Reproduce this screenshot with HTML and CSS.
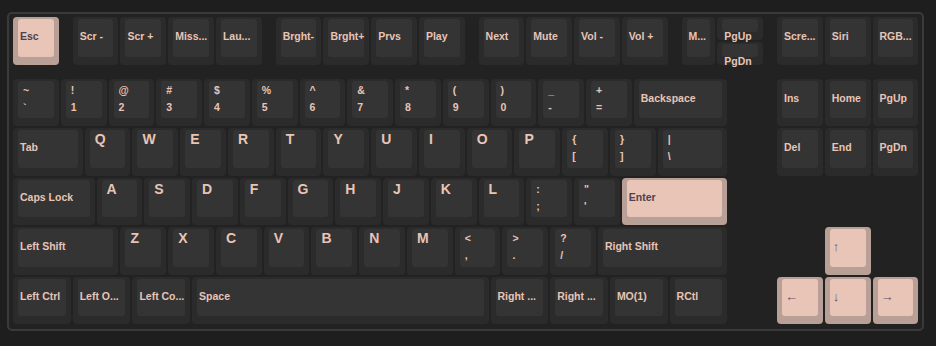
FILE: index.html
```html
<html>
    <head>
        <title>Keymap</title>
        <meta name="viewport" content="width=device-width, initial-scale=1.0">
        <link rel="stylesheet" href="styles.css">
    </head>
    <body>
        <div class="board">
            <div class="row row-fn">
                <div class="key accent"><div class="cap">Esc</div></div>
                <div class="key ml25"><div class="cap">Scr -</div></div>
                <div class="key"><div class="cap">Scr +</div></div>
                <div class="key"><div class="cap">Miss...</div></div>
                <div class="key"><div class="cap">Lau...</div></div>
                <div class="key ml25"><div class="cap">Brght-</div></div>
                <div class="key"><div class="cap">Brght+</div></div>
                <div class="key"><div class="cap">Prvs</div></div>
                <div class="key"><div class="cap">Play</div></div>
                <div class="key ml25"><div class="cap">Next</div></div>
                <div class="key"><div class="cap">Mute</div></div>
                <div class="key"><div class="cap">Vol -</div></div>
                <div class="key"><div class="cap">Vol +</div></div>
                <div class="key w075 ml25"><div class="cap">M...</div></div>
                <div class="stack">
                    <div class="key half"><div class="cap">PgUp</div></div>
                    <div class="key half"><div class="cap">PgDn</div></div>
                </div>
                <div class="key ml25"><div class="cap">Scre...</div></div>
                <div class="key"><div class="cap">Siri</div></div>
                <div class="key"><div class="cap">RGB...</div></div>
            </div>

            <div class="row">
                <div class="key"><div class="cap dual"><span>~</span><span>`</span></div></div>
                <div class="key"><div class="cap dual"><span>!</span><span>1</span></div></div>
                <div class="key"><div class="cap dual"><span>@</span><span>2</span></div></div>
                <div class="key"><div class="cap dual"><span>#</span><span>3</span></div></div>
                <div class="key"><div class="cap dual"><span>$</span><span>4</span></div></div>
                <div class="key"><div class="cap dual"><span>%</span><span>5</span></div></div>
                <div class="key"><div class="cap dual"><span>^</span><span>6</span></div></div>
                <div class="key"><div class="cap dual"><span>&amp;</span><span>7</span></div></div>
                <div class="key"><div class="cap dual"><span>*</span><span>8</span></div></div>
                <div class="key"><div class="cap dual"><span>(</span><span>9</span></div></div>
                <div class="key"><div class="cap dual"><span>)</span><span>0</span></div></div>
                <div class="key"><div class="cap dual"><span>_</span><span>-</span></div></div>
                <div class="key"><div class="cap dual"><span>+</span><span>=</span></div></div>
                <div class="key w2"><div class="cap">Backspace</div></div>
                <div class="key ml1"><div class="cap">Ins</div></div>
                <div class="key"><div class="cap">Home</div></div>
                <div class="key"><div class="cap">PgUp</div></div>
            </div>

            <div class="row">
                <div class="key w15"><div class="cap">Tab</div></div>
                <div class="key"><div class="cap alpha">Q</div></div>
                <div class="key"><div class="cap alpha">W</div></div>
                <div class="key"><div class="cap alpha">E</div></div>
                <div class="key"><div class="cap alpha">R</div></div>
                <div class="key"><div class="cap alpha">T</div></div>
                <div class="key"><div class="cap alpha">Y</div></div>
                <div class="key"><div class="cap alpha">U</div></div>
                <div class="key"><div class="cap alpha">I</div></div>
                <div class="key"><div class="cap alpha">O</div></div>
                <div class="key"><div class="cap alpha">P</div></div>
                <div class="key"><div class="cap dual"><span>{</span><span>[</span></div></div>
                <div class="key"><div class="cap dual"><span>}</span><span>]</span></div></div>
                <div class="key w15"><div class="cap dual"><span>|</span><span>\</span></div></div>
                <div class="key ml1"><div class="cap">Del</div></div>
                <div class="key"><div class="cap">End</div></div>
                <div class="key"><div class="cap">PgDn</div></div>
            </div>

            <div class="row">
                <div class="key w175"><div class="cap">Caps Lock</div></div>
                <div class="key"><div class="cap alpha">A</div></div>
                <div class="key"><div class="cap alpha">S</div></div>
                <div class="key"><div class="cap alpha">D</div></div>
                <div class="key"><div class="cap alpha">F</div></div>
                <div class="key"><div class="cap alpha">G</div></div>
                <div class="key"><div class="cap alpha">H</div></div>
                <div class="key"><div class="cap alpha">J</div></div>
                <div class="key"><div class="cap alpha">K</div></div>
                <div class="key"><div class="cap alpha">L</div></div>
                <div class="key"><div class="cap dual"><span>:</span><span>;</span></div></div>
                <div class="key"><div class="cap dual"><span>"</span><span>'</span></div></div>
                <div class="key w225 accent"><div class="cap">Enter</div></div>
            </div>

            <div class="row">
                <div class="key w225"><div class="cap">Left Shift</div></div>
                <div class="key"><div class="cap alpha">Z</div></div>
                <div class="key"><div class="cap alpha">X</div></div>
                <div class="key"><div class="cap alpha">C</div></div>
                <div class="key"><div class="cap alpha">V</div></div>
                <div class="key"><div class="cap alpha">B</div></div>
                <div class="key"><div class="cap alpha">N</div></div>
                <div class="key"><div class="cap alpha">M</div></div>
                <div class="key"><div class="cap dual"><span>&lt;</span><span>,</span></div></div>
                <div class="key"><div class="cap dual"><span>&gt;</span><span>.</span></div></div>
                <div class="key"><div class="cap dual"><span>?</span><span>/</span></div></div>
                <div class="key w275"><div class="cap">Right Shift</div></div>
                <div class="key ml2 accent"><div class="cap arrow">↑</div></div>
            </div>

            <div class="row">
                <div class="key w125"><div class="cap">Left Ctrl</div></div>
                <div class="key w125"><div class="cap">Left O...</div></div>
                <div class="key w125"><div class="cap">Left Co...</div></div>
                <div class="key w625"><div class="cap">Space</div></div>
                <div class="key w125"><div class="cap">Right ...</div></div>
                <div class="key w125"><div class="cap">Right ...</div></div>
                <div class="key w125"><div class="cap">MO(1)</div></div>
                <div class="key w125"><div class="cap">RCtl</div></div>
                <div class="key ml1 accent"><div class="cap arrow">←</div></div>
                <div class="key accent"><div class="cap arrow">↓</div></div>
                <div class="key accent"><div class="cap arrow">→</div></div>
            </div>
        </div>
    </body>
</html>
```

FILE: styles.css
```css
* {
    box-sizing: border-box;
}

html, body {
    margin: 0;
    padding: 0;
    background-color: #1e1e1e;
}

body {
    font-family: "Liberation Sans", Arial, sans-serif;
    font-weight: bold;
    font-size: 10.5px;
    color: #e8c4b6;
}

.board {
    --u: 47.75px;
    width: 917.25px;
    margin: 12px 0 0 7px;
    padding: 3px 2px 3px 4px;
    border: 2px solid #3a3a3a;
    border-radius: 5px;
    background-color: #222222;
}

.row {
    display: flex;
}

.row-fn {
    margin-bottom: 12.375px;
}

.key {
    flex: none;
    width: calc(var(--u) - 2px);
    height: 47.5px;
    margin: 0 2px 2px 0;
    padding: 2px 5px 8px 5px;
    background-color: #2b2b2b;
    border-radius: 4px;
}

.cap {
    height: 100%;
    padding-left: 2px;
    background-color: #343434;
    border-radius: 3px;
    line-height: 35px;
    white-space: nowrap;
}

.cap.dual {
    padding: 3px 0 0 5px;
    line-height: 12px;
}

.cap.dual span {
    display: block;
}

.cap.dual span + span {
    margin-top: 5px;
}

.cap.alpha {
    padding: 1px 0 0 5px;
    font-size: 14px;
    line-height: 16px;
}

.stack {
    display: flex;
    flex-direction: column;
}

.key.half {
    height: 22.75px;
}

/* widths */
.w075 { width: calc(var(--u) * 0.75 - 2px); }
.w125 { width: calc(var(--u) * 1.25 - 2px); }
.w15 { width: calc(var(--u) * 1.5 - 2px); }
.w175 { width: calc(var(--u) * 1.75 - 2px); }
.w2 { width: calc(var(--u) * 2 - 2px); }
.w225 { width: calc(var(--u) * 2.25 - 2px); }
.w275 { width: calc(var(--u) * 2.75 - 2px); }
.w625 { width: calc(var(--u) * 6.25 - 2px); }

/* spacers */
.ml25 { margin-left: calc(var(--u) * 0.25); }
.ml1 { margin-left: var(--u); }
.ml2 { margin-left: calc(var(--u) * 2); }

.key.accent {
    background-color: #b9a096;
}

.key.accent .cap {
    background-color: #e9c5b8;
    color: #4c4250;
}

.key.accent .cap.arrow {
    padding-left: 3px;
    font-size: 13px;
    font-weight: normal;
    color: #5e5262;
}
```
